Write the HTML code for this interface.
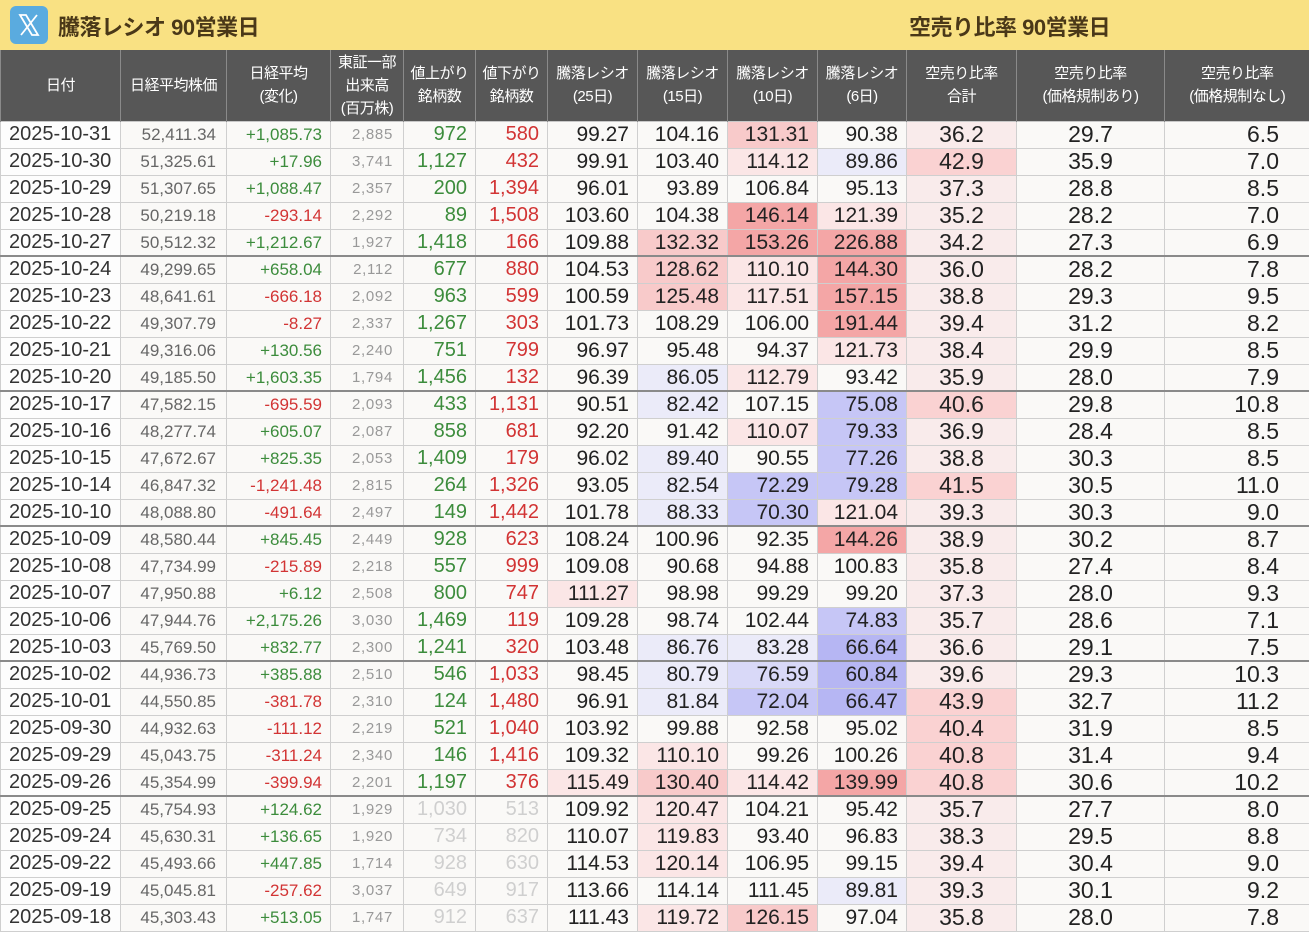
<!DOCTYPE html>
<html><head><meta charset="utf-8"><style>
*{margin:0;padding:0;box-sizing:border-box}
body{width:1309px;height:932px;overflow:hidden;background:#faf9f7;font-family:"Liberation Sans","Noto Sans CJK JP",sans-serif}
.top{height:50px;background:#f9e183;position:relative}
.logo{position:absolute;left:10px;top:6px;width:38px;height:38px;border-radius:6px;background:#5aabdf}
.t1,.t2{position:absolute;top:10px;font-size:22px;font-weight:bold;color:#4a3818;letter-spacing:-0.5px}
.t1{left:58px}.t2{left:909px}
table{border-collapse:collapse;table-layout:fixed;width:1309px}
th{background:#575757;color:#fff;font-weight:normal;font-size:15px;line-height:23px;height:71px;border-left:1px solid #8a8a8a;letter-spacing:-0.5px}
td{height:27px;border:1px solid #cfcfcf;border-top-color:#c8c8c8;font-size:20px;color:#222;text-align:right;padding:0 8px;white-space:nowrap;line-height:25px}
td:first-child{text-align:left;padding-left:8px;background:#fdfdfd;color:#333}
tr.w td{border-top:2px solid #8a8a8a}
.p{color:#666;font-size:17px;padding-right:10px}
.c{font-size:17px}
.v{color:#999;font-size:15px;letter-spacing:0.7px;padding-right:10px}
.g{color:#3c8c3c}.r{color:#d23434}.x{color:#cfcfcf}
.R{font-size:21px}
.T{font-size:23px;text-align:center;background:#f9ebeb}
.TT{font-size:23px;text-align:center;background:#fad2d2}
.W{font-size:23px;text-align:center}
.N{font-size:23px;padding-right:30px}
.r1{background:#fbe6e6}.r2{background:#f8caca}.r3{background:#f4a6a6}
.b1{background:#ebebf9}.b2{background:#d9d9f8}.b3{background:#c6c6f6}.b4{background:#b6b6f3}
</style></head><body>
<div class="top"><div class="logo"><svg width="38" height="38" viewBox="0 0 38 38"><path d="M10 9h6l12 20h-6z" fill="none" stroke="#fff" stroke-width="1.8"/><path d="M27 9L11 29" stroke="#fff" stroke-width="1.8"/></svg></div>
<div class="t1">騰落レシオ 90営業日</div><div class="t2">空売り比率 90営業日</div></div>
<table>
<colgroup><col style="width:120px"><col style="width:106px"><col style="width:104px"><col style="width:73px"><col style="width:72px"><col style="width:72px"><col style="width:90px"><col style="width:90px"><col style="width:90px"><col style="width:89px"><col style="width:110px"><col style="width:148px"><col style="width:145px"></colgroup>
<tr><th>日付</th><th>日経平均株価</th><th>日経平均<br>(変化)</th><th>東証一部<br>出来高<br>(百万株)</th><th>値上がり<br>銘柄数</th><th>値下がり<br>銘柄数</th><th>騰落レシオ<br>(25日)</th><th>騰落レシオ<br>(15日)</th><th>騰落レシオ<br>(10日)</th><th>騰落レシオ<br>(6日)</th><th>空売り比率<br>合計</th><th>空売り比率<br>(価格規制あり)</th><th>空売り比率<br>(価格規制なし)</th></tr>
<tr><td>2025-10-31</td><td class="p">52,411.34</td><td class="c g">+1,085.73</td><td class="v">2,885</td><td class="g">972</td><td class="r">580</td><td class="R">99.27</td><td class="R">104.16</td><td class="R r2">131.31</td><td class="R">90.38</td><td class="T">36.2</td><td class="W">29.7</td><td class="N">6.5</td></tr>
<tr><td>2025-10-30</td><td class="p">51,325.61</td><td class="c g">+17.96</td><td class="v">3,741</td><td class="g">1,127</td><td class="r">432</td><td class="R">99.91</td><td class="R">103.40</td><td class="R r1">114.12</td><td class="R b1">89.86</td><td class="TT">42.9</td><td class="W">35.9</td><td class="N">7.0</td></tr>
<tr><td>2025-10-29</td><td class="p">51,307.65</td><td class="c g">+1,088.47</td><td class="v">2,357</td><td class="g">200</td><td class="r">1,394</td><td class="R">96.01</td><td class="R">93.89</td><td class="R">106.84</td><td class="R">95.13</td><td class="T">37.3</td><td class="W">28.8</td><td class="N">8.5</td></tr>
<tr><td>2025-10-28</td><td class="p">50,219.18</td><td class="c r">-293.14</td><td class="v">2,292</td><td class="g">89</td><td class="r">1,508</td><td class="R">103.60</td><td class="R">104.38</td><td class="R r3">146.14</td><td class="R r1">121.39</td><td class="T">35.2</td><td class="W">28.2</td><td class="N">7.0</td></tr>
<tr><td>2025-10-27</td><td class="p">50,512.32</td><td class="c g">+1,212.67</td><td class="v">1,927</td><td class="g">1,418</td><td class="r">166</td><td class="R">109.88</td><td class="R r2">132.32</td><td class="R r3">153.26</td><td class="R r3">226.88</td><td class="T">34.2</td><td class="W">27.3</td><td class="N">6.9</td></tr>
<tr class="w"><td>2025-10-24</td><td class="p">49,299.65</td><td class="c g">+658.04</td><td class="v">2,112</td><td class="g">677</td><td class="r">880</td><td class="R">104.53</td><td class="R r2">128.62</td><td class="R r1">110.10</td><td class="R r3">144.30</td><td class="T">36.0</td><td class="W">28.2</td><td class="N">7.8</td></tr>
<tr><td>2025-10-23</td><td class="p">48,641.61</td><td class="c r">-666.18</td><td class="v">2,092</td><td class="g">963</td><td class="r">599</td><td class="R">100.59</td><td class="R r2">125.48</td><td class="R r1">117.51</td><td class="R r3">157.15</td><td class="T">38.8</td><td class="W">29.3</td><td class="N">9.5</td></tr>
<tr><td>2025-10-22</td><td class="p">49,307.79</td><td class="c r">-8.27</td><td class="v">2,337</td><td class="g">1,267</td><td class="r">303</td><td class="R">101.73</td><td class="R">108.29</td><td class="R">106.00</td><td class="R r3">191.44</td><td class="T">39.4</td><td class="W">31.2</td><td class="N">8.2</td></tr>
<tr><td>2025-10-21</td><td class="p">49,316.06</td><td class="c g">+130.56</td><td class="v">2,240</td><td class="g">751</td><td class="r">799</td><td class="R">96.97</td><td class="R">95.48</td><td class="R">94.37</td><td class="R r1">121.73</td><td class="T">38.4</td><td class="W">29.9</td><td class="N">8.5</td></tr>
<tr><td>2025-10-20</td><td class="p">49,185.50</td><td class="c g">+1,603.35</td><td class="v">1,794</td><td class="g">1,456</td><td class="r">132</td><td class="R">96.39</td><td class="R b1">86.05</td><td class="R r1">112.79</td><td class="R">93.42</td><td class="T">35.9</td><td class="W">28.0</td><td class="N">7.9</td></tr>
<tr class="w"><td>2025-10-17</td><td class="p">47,582.15</td><td class="c r">-695.59</td><td class="v">2,093</td><td class="g">433</td><td class="r">1,131</td><td class="R">90.51</td><td class="R b1">82.42</td><td class="R">107.15</td><td class="R b3">75.08</td><td class="TT">40.6</td><td class="W">29.8</td><td class="N">10.8</td></tr>
<tr><td>2025-10-16</td><td class="p">48,277.74</td><td class="c g">+605.07</td><td class="v">2,087</td><td class="g">858</td><td class="r">681</td><td class="R">92.20</td><td class="R">91.42</td><td class="R r1">110.07</td><td class="R b3">79.33</td><td class="T">36.9</td><td class="W">28.4</td><td class="N">8.5</td></tr>
<tr><td>2025-10-15</td><td class="p">47,672.67</td><td class="c g">+825.35</td><td class="v">2,053</td><td class="g">1,409</td><td class="r">179</td><td class="R">96.02</td><td class="R b1">89.40</td><td class="R">90.55</td><td class="R b3">77.26</td><td class="T">38.8</td><td class="W">30.3</td><td class="N">8.5</td></tr>
<tr><td>2025-10-14</td><td class="p">46,847.32</td><td class="c r">-1,241.48</td><td class="v">2,815</td><td class="g">264</td><td class="r">1,326</td><td class="R">93.05</td><td class="R b1">82.54</td><td class="R b3">72.29</td><td class="R b3">79.28</td><td class="TT">41.5</td><td class="W">30.5</td><td class="N">11.0</td></tr>
<tr><td>2025-10-10</td><td class="p">48,088.80</td><td class="c r">-491.64</td><td class="v">2,497</td><td class="g">149</td><td class="r">1,442</td><td class="R">101.78</td><td class="R b1">88.33</td><td class="R b3">70.30</td><td class="R r1">121.04</td><td class="T">39.3</td><td class="W">30.3</td><td class="N">9.0</td></tr>
<tr class="w"><td>2025-10-09</td><td class="p">48,580.44</td><td class="c g">+845.45</td><td class="v">2,449</td><td class="g">928</td><td class="r">623</td><td class="R">108.24</td><td class="R">100.96</td><td class="R">92.35</td><td class="R r3">144.26</td><td class="T">38.9</td><td class="W">30.2</td><td class="N">8.7</td></tr>
<tr><td>2025-10-08</td><td class="p">47,734.99</td><td class="c r">-215.89</td><td class="v">2,218</td><td class="g">557</td><td class="r">999</td><td class="R">109.08</td><td class="R">90.68</td><td class="R">94.88</td><td class="R">100.83</td><td class="T">35.8</td><td class="W">27.4</td><td class="N">8.4</td></tr>
<tr><td>2025-10-07</td><td class="p">47,950.88</td><td class="c g">+6.12</td><td class="v">2,508</td><td class="g">800</td><td class="r">747</td><td class="R r1">111.27</td><td class="R">98.98</td><td class="R">99.29</td><td class="R">99.20</td><td class="T">37.3</td><td class="W">28.0</td><td class="N">9.3</td></tr>
<tr><td>2025-10-06</td><td class="p">47,944.76</td><td class="c g">+2,175.26</td><td class="v">3,030</td><td class="g">1,469</td><td class="r">119</td><td class="R">109.28</td><td class="R">98.74</td><td class="R">102.44</td><td class="R b3">74.83</td><td class="T">35.7</td><td class="W">28.6</td><td class="N">7.1</td></tr>
<tr><td>2025-10-03</td><td class="p">45,769.50</td><td class="c g">+832.77</td><td class="v">2,300</td><td class="g">1,241</td><td class="r">320</td><td class="R">103.48</td><td class="R b1">86.76</td><td class="R b1">83.28</td><td class="R b4">66.64</td><td class="T">36.6</td><td class="W">29.1</td><td class="N">7.5</td></tr>
<tr class="w"><td>2025-10-02</td><td class="p">44,936.73</td><td class="c g">+385.88</td><td class="v">2,510</td><td class="g">546</td><td class="r">1,033</td><td class="R">98.45</td><td class="R b1">80.79</td><td class="R b2">76.59</td><td class="R b4">60.84</td><td class="T">39.6</td><td class="W">29.3</td><td class="N">10.3</td></tr>
<tr><td>2025-10-01</td><td class="p">44,550.85</td><td class="c r">-381.78</td><td class="v">2,310</td><td class="g">124</td><td class="r">1,480</td><td class="R">96.91</td><td class="R b1">81.84</td><td class="R b3">72.04</td><td class="R b4">66.47</td><td class="TT">43.9</td><td class="W">32.7</td><td class="N">11.2</td></tr>
<tr><td>2025-09-30</td><td class="p">44,932.63</td><td class="c r">-111.12</td><td class="v">2,219</td><td class="g">521</td><td class="r">1,040</td><td class="R">103.92</td><td class="R">99.88</td><td class="R">92.58</td><td class="R">95.02</td><td class="TT">40.4</td><td class="W">31.9</td><td class="N">8.5</td></tr>
<tr><td>2025-09-29</td><td class="p">45,043.75</td><td class="c r">-311.24</td><td class="v">2,340</td><td class="g">146</td><td class="r">1,416</td><td class="R">109.32</td><td class="R r1">110.10</td><td class="R">99.26</td><td class="R">100.26</td><td class="TT">40.8</td><td class="W">31.4</td><td class="N">9.4</td></tr>
<tr><td>2025-09-26</td><td class="p">45,354.99</td><td class="c r">-399.94</td><td class="v">2,201</td><td class="g">1,197</td><td class="r">376</td><td class="R r1">115.49</td><td class="R r2">130.40</td><td class="R r1">114.42</td><td class="R r3">139.99</td><td class="TT">40.8</td><td class="W">30.6</td><td class="N">10.2</td></tr>
<tr class="w"><td>2025-09-25</td><td class="p">45,754.93</td><td class="c g">+124.62</td><td class="v">1,929</td><td class="x">1,030</td><td class="x">513</td><td class="R">109.92</td><td class="R r1">120.47</td><td class="R">104.21</td><td class="R">95.42</td><td class="T">35.7</td><td class="W">27.7</td><td class="N">8.0</td></tr>
<tr><td>2025-09-24</td><td class="p">45,630.31</td><td class="c g">+136.65</td><td class="v">1,920</td><td class="x">734</td><td class="x">820</td><td class="R">110.07</td><td class="R r1">119.83</td><td class="R">93.40</td><td class="R">96.83</td><td class="T">38.3</td><td class="W">29.5</td><td class="N">8.8</td></tr>
<tr><td>2025-09-22</td><td class="p">45,493.66</td><td class="c g">+447.85</td><td class="v">1,714</td><td class="x">928</td><td class="x">630</td><td class="R">114.53</td><td class="R r1">120.14</td><td class="R">106.95</td><td class="R">99.15</td><td class="T">39.4</td><td class="W">30.4</td><td class="N">9.0</td></tr>
<tr><td>2025-09-19</td><td class="p">45,045.81</td><td class="c r">-257.62</td><td class="v">3,037</td><td class="x">649</td><td class="x">917</td><td class="R">113.66</td><td class="R">114.14</td><td class="R">111.45</td><td class="R b1">89.81</td><td class="T">39.3</td><td class="W">30.1</td><td class="N">9.2</td></tr>
<tr><td>2025-09-18</td><td class="p">45,303.43</td><td class="c g">+513.05</td><td class="v">1,747</td><td class="x">912</td><td class="x">637</td><td class="R">111.43</td><td class="R r1">119.72</td><td class="R r2">126.15</td><td class="R">97.04</td><td class="T">35.8</td><td class="W">28.0</td><td class="N">7.8</td></tr>
</table>
</body></html>
